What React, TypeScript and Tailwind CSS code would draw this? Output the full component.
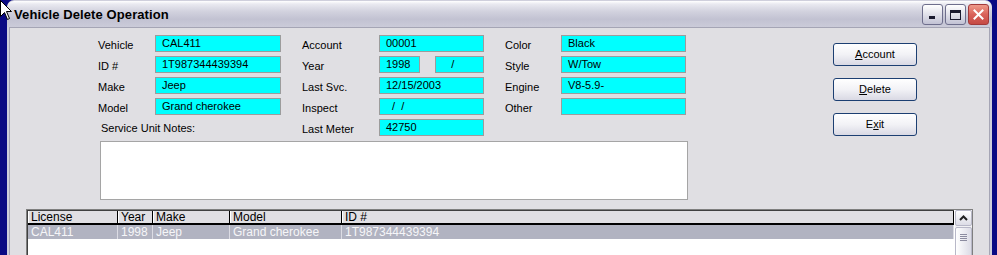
import React from 'react';

// Vehicle Delete Operation - XP silver style dialog

type FieldProps = { w: string; children?: React.ReactNode };

function Field({ w, children }: FieldProps) {
    return (
        <div className={`h-[17px] bg-[#00ffff] border border-[#9c9c9c] flex items-center pl-[6px] whitespace-pre text-black ${w}`}>
            {children}
        </div>
    );
}

function Label({ w, children }: FieldProps) {
    return <div className={`h-[17px] leading-[21px] whitespace-nowrap ${w}`}>{children}</div>;
}

function Row({ lw, fw, label, value }: { lw: string; fw: string; label: string; value: string }) {
    return (
        <div className="flex">
            <Label w={lw}>{label}</Label>
            <Field w={fw}>{value}</Field>
        </div>
    );
}

function XpButton({ children }: { children: React.ReactNode }) {
    return (
        <button className="w-[84px] h-[23px] rounded-[3px] border border-[#1c3f72] bg-linear-to-b from-white via-[#f2f2f6] to-[#d9d9e4] text-[11px] text-black flex items-center justify-center">
            {children}
        </button>
    );
}

const COLS = [
    { name: "License", w: "w-[90px]", v: "CAL411" },
    { name: "Year", w: "w-[35px]", v: "1998" },
    { name: "Make", w: "w-[77px]", v: "Jeep" },
    { name: "Model", w: "w-[112px]", v: "Grand cherokee" },
    { name: "ID #", w: "flex-1", v: "1T987344439394" },
];

export default function App() {
    return (
        <div className="relative w-[997px] h-[255px] overflow-hidden bg-[#0a0a84] flex font-['Liberation_Sans',Arial,sans-serif] text-[11px] text-black">
            <div className="w-[7px] shrink-0" />

            {/* Window */}
            <div className="w-[985px] shrink-0 flex flex-col bg-[#cfcfdc] rounded-t-[7px] pt-[1px]">
                {/* Title bar */}
                <div className="h-[26px] shrink-0 rounded-t-[7px] bg-[linear-gradient(to_bottom,#ffffff_0%,#e9e9f0_12%,#d2d2de_40%,#c2c2d2_70%,#cbcbd9_100%)] flex items-center pl-[7px] pr-[3px]">
                    <span className="font-bold text-[13px] text-black tracking-[0.1px] mt-[1px]">Vehicle Delete Operation</span>
                    <div className="ml-auto flex gap-[2px] mt-[1px]">
                        <div className="w-[21px] h-[21px] rounded-[3px] border border-[#6e6e8c] bg-linear-to-b from-white to-[#c2c2d4] flex items-end justify-start pl-[6px] pb-[5px]">
                            <div className="w-[6px] h-[3px] bg-[#1a1a2e]" />
                        </div>
                        <div className="w-[21px] h-[21px] rounded-[3px] border border-[#6e6e8c] bg-linear-to-b from-white to-[#c2c2d4] flex items-center justify-center">
                            <div className="w-[11px] h-[10px] border border-[#1a1a2e] border-t-[3px]" />
                        </div>
                        <div className="w-[21px] h-[21px] rounded-[3px] border border-[#a23a3a] bg-linear-to-b from-[#ee9a8a] via-[#d9625a] to-[#c54a44] flex items-center justify-center">
                            <svg width="11" height="11" viewBox="0 0 11 11">
                                <path d="M1.5 1.5 L9.5 9.5 M9.5 1.5 L1.5 9.5" stroke="#ffffff" strokeWidth="2" strokeLinecap="square" />
                            </svg>
                        </div>
                    </div>
                </div>

                {/* Client area */}
                <div className="flex-1 mx-[2px] border border-[#a5a5b5] bg-[#e0dfe3] pt-[7px]">
                    <div className="flex items-start">
                        <div className="flex pl-[88px]">
                            {/* column 1 */}
                            <div className="flex flex-col gap-[4px]">
                                <Row lw="w-[57px]" fw="w-[126px]" label="Vehicle" value="CAL411" />
                                <Row lw="w-[57px]" fw="w-[126px]" label="ID #" value="1T987344439394" />
                                <Row lw="w-[57px]" fw="w-[126px]" label="Make" value="Jeep" />
                                <Row lw="w-[57px]" fw="w-[126px]" label="Model" value="Grand cherokee" />
                                <div className="h-[17px] leading-[19px] pl-[3px]">Service Unit Notes:</div>
                            </div>
                            {/* column 2 */}
                            <div className="flex flex-col gap-[4px] ml-[21px]">
                                <Row lw="w-[77px]" fw="w-[105px]" label="Account" value="00001" />
                                <div className="flex">
                                    <Label w="w-[77px]">Year</Label>
                                    <Field w="w-[41px]">1998</Field>
                                    <div className="w-[15px]" />
                                    <Field w="w-[49px]">{"   /"}</Field>
                                </div>
                                <Row lw="w-[77px]" fw="w-[105px]" label="Last Svc." value="12/15/2003" />
                                <Row lw="w-[77px]" fw="w-[105px]" label="Inspect" value={"  /  /"} />
                                <Row lw="w-[77px]" fw="w-[105px]" label="Last Meter" value="42750" />
                            </div>
                            {/* column 3 */}
                            <div className="flex flex-col gap-[4px] ml-[21px]">
                                <Row lw="w-[56px]" fw="w-[125px]" label="Color" value="Black" />
                                <Row lw="w-[56px]" fw="w-[125px]" label="Style" value="W/Tow" />
                                <Row lw="w-[56px]" fw="w-[125px]" label="Engine" value="V8-5.9-" />
                                <Row lw="w-[56px]" fw="w-[125px]" label="Other" value="" />
                            </div>
                        </div>

                        {/* buttons */}
                        <div className="ml-[147px] mt-[8px] flex flex-col gap-[12px]">
                            <XpButton><span className="underline">A</span>ccount</XpButton>
                            <XpButton><span className="underline">D</span>elete</XpButton>
                            <XpButton>E<span className="underline">x</span>it</XpButton>
                        </div>
                    </div>

                    {/* notes */}
                    <div className="ml-[90px] mt-[5px] w-[588px] h-[59px] bg-white border border-[#a5a5a5]" />

                    {/* grid */}
                    <div className="ml-[16px] mt-[9px] w-[947px] h-[60px] border border-[#7f7f7f] bg-white flex">
                        <div className="flex-1 flex flex-col border-l border-t border-[#404040]">
                            <div className="flex h-[14px] bg-[#e0dfe3] border-b-2 border-black">
                                {COLS.map((c) => (
                                    <div key={c.name} className={`${c.w} h-full border-r border-black border-l border-l-white pl-[2px] leading-[13px] text-[12px]`}>
                                        {c.name}
                                    </div>
                                ))}
                            </div>
                            <div className="flex h-[14px] bg-[#b1b3c1]">
                                {COLS.map((c) => (
                                    <div key={c.name} className={`${c.w} h-full border-r border-[#dcdce4] pl-[3px] leading-[14px] text-[12px] text-[#f6f6f8]`}>
                                        {c.v}
                                    </div>
                                ))}
                            </div>
                        </div>
                        {/* scrollbar */}
                        <div className="w-[17px] ml-[1px] bg-[#f1f1f4] flex flex-col">
                            <div className="h-[16px] rounded-[2px] border border-[#b8b8c8] bg-linear-to-b from-white to-[#dcdce6] flex items-center justify-center">
                                <svg width="9" height="6" viewBox="0 0 9 6">
                                    <path d="M1 5 L4.5 1.5 L8 5" stroke="#222" strokeWidth="2" fill="none" />
                                </svg>
                            </div>
                            <div className="mt-[1px] h-[40px] rounded-[2px] border border-[#b8b8c8] bg-linear-to-r from-white to-[#dcdce6] flex flex-col items-center pt-[6px] gap-[1px]">
                                <div className="w-[7px] h-[1px] bg-[#8c8ca0]" />
                                <div className="w-[7px] h-[1px] bg-[#8c8ca0]" />
                                <div className="w-[7px] h-[1px] bg-[#8c8ca0]" />
                                <div className="w-[7px] h-[1px] bg-[#8c8ca0]" />
                            </div>
                        </div>
                    </div>
                </div>
            </div>

            <div className="flex-1" />

            {/* mouse pointer */}
            <svg className="absolute left-0 top-0" width="13" height="21" viewBox="0 0 13 21">
                <path d="M0.5 0.5 L0.5 16.5 L4.5 12.5 L7.5 19.5 L9.5 18.5 L6.5 11.5 L11.5 11.5 Z" fill="#ffffff" stroke="#000000" strokeWidth="1" />
            </svg>
        </div>
    );
}
